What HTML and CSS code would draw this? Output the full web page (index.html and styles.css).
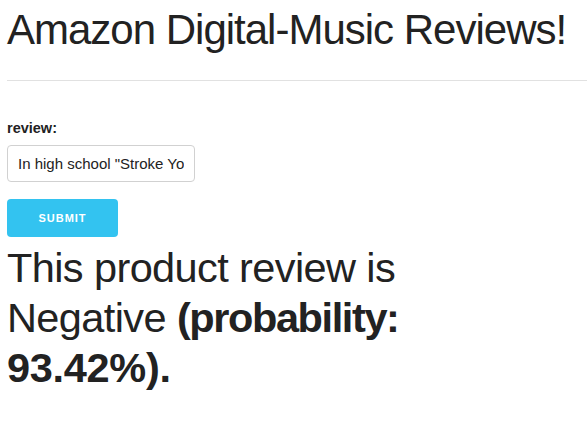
FILE: index.html
```html
<!DOCTYPE html>
<html>
<head>
<meta charset="utf-8">
<link rel="stylesheet" href="styles.css">
</head>
<body>
<div class="page">
  <h1 class="title">Amazon Digital-Music Reviews!</h1>
  <hr class="rule">
  <form class="form">
    <label class="label" for="review">review:</label>
    <input class="input" id="review" type="text" value="In high school &quot;Stroke You Up&quot; was on repeat">
    <button class="button" type="button">Submit</button>
  </form>
  <p class="result">This product review is Negative <strong class="prob">(probability: <span class="num">93.42%).</span></strong></p>
</div>
</body>
</html>
```
FILE: styles.css
```css
html, body { margin: 0; padding: 0; background: #fff; }
body {
  font-family: "Liberation Sans", Arial, sans-serif;
  color: #222;
}
.page { padding: 0 7px; }
.title {
  margin: 0;
  padding-top: 5px;
  font-size: 42px;
  font-weight: 400;
  line-height: 50px;
  letter-spacing: -1px;
  white-space: nowrap;
}
.rule {
  margin: 25px -7px 0 0;
  border: 0;
  border-top: 1px solid #e1e1e1;
}
.form { display: flex; flex-direction: column; align-items: flex-start; margin-top: 39px; }
.label { font-size: 14.5px; font-weight: 700; margin-bottom: 9px; line-height: 16px; }
.input {
  box-sizing: border-box;
  width: 188px;
  height: 37px;
  padding: 6px 10px;
  border: 1px solid #d1d1d1;
  border-radius: 4px;
  font-family: "Liberation Sans", Arial, sans-serif;
  font-size: 15px;
  color: #222;
}
.button {
  margin-top: 17px;
  box-sizing: border-box;
  width: 111px;
  height: 38px;
  border: 0;
  border-radius: 4px;
  background: #33c3f0;
  color: #fff;
  font-family: "Liberation Sans", Arial, sans-serif;
  font-size: 11px;
  font-weight: 700;
  letter-spacing: 1px;
  text-transform: uppercase;
}
.result {
  margin: 6px 0 0;
  width: 420px;
  font-size: 41.5px;
  line-height: 50px;
  letter-spacing: -0.6px;
}
.prob { letter-spacing: -1.4px; }
.num { letter-spacing: -0.3px; }
```
